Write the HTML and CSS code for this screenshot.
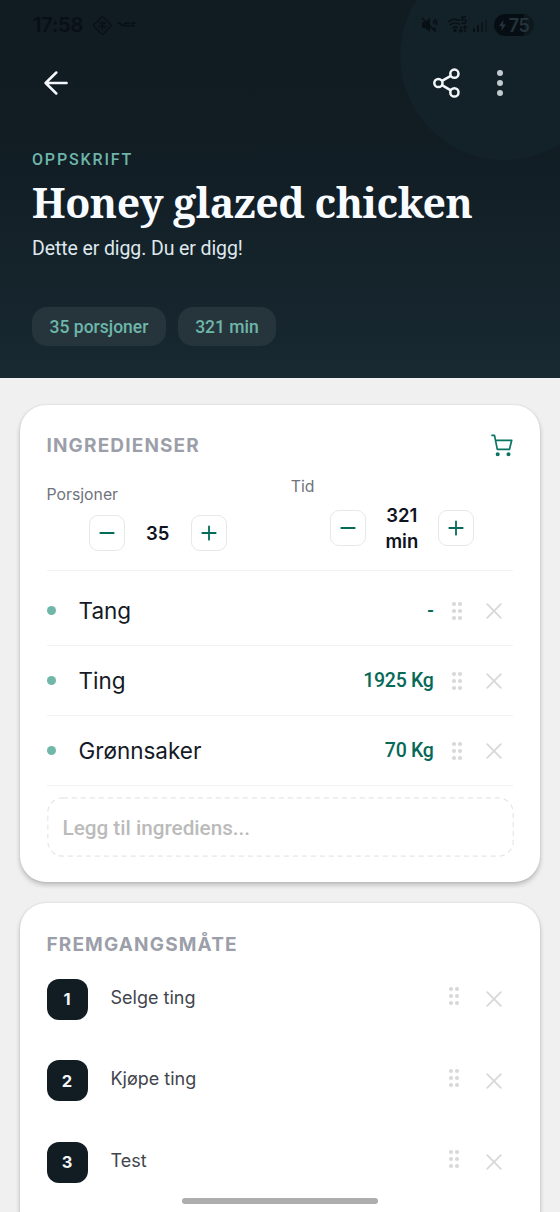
FILE: index.html
```html
<!DOCTYPE html>
<html lang="no">
<head>
<meta charset="utf-8">
<meta name="viewport" content="width=device-width">
<title>Honey glazed chicken</title>
<link rel="stylesheet" href="styles.css">
</head>
<body>
<svg class="defs" width="0" height="0">
  <symbol id="grip" viewBox="0 0 12 20"><g fill="#d9d9d9"><circle cx="3" cy="3" r="2.1"/><circle cx="9" cy="3" r="2.1"/><circle cx="3" cy="10" r="2.1"/><circle cx="9" cy="10" r="2.1"/><circle cx="3" cy="17" r="2.1"/><circle cx="9" cy="17" r="2.1"/></g></symbol>
  <symbol id="close" viewBox="0 0 16 16"><path d="M1.2 1.2 14.8 14.8M14.8 1.2 1.2 14.8" fill="none" stroke="#d8d8d8" stroke-width="1.8" stroke-linecap="round"/></symbol>
  <symbol id="minus" viewBox="0 0 16 16"><path d="M1.3 8h13.4" stroke="#056a59" stroke-width="1.8" stroke-linecap="round"/></symbol>
  <symbol id="plus" viewBox="0 0 16 16"><path d="M1.3 8h13.4M8 1.3v13.4" stroke="#056a59" stroke-width="1.8" stroke-linecap="round"/></symbol>
</svg>
<header class="hero">
  <div class="orb"></div>
  <div class="status">
    <span class="clock">17:58</span>
    <svg class="diamond" width="19" height="19" viewBox="0 0 19 19" fill="none" stroke="currentColor" stroke-width="1.3"><path d="M8.4 1.4 1.4 8.4a1.6 1.6 0 0 0 0 2.2l7 7a1.6 1.6 0 0 0 2.2 0l7-7a1.6 1.6 0 0 0 0-2.2l-7-7a1.6 1.6 0 0 0-2.2 0z"/><path stroke-width="1" d="M6 7h7M5 10h9M7 13l5-7M7 6l5 7M9.500 4.500v10"/></svg>
    <svg class="wordmark" width="20" height="6" viewBox="0 0 20 6" fill="none" stroke="currentColor" stroke-width="1.3"><path d="M0 1h3l2 3 3-3M13 1H9L8 4h4V3M19 1h-4l-.5 3H18"/></svg>
    <span class="spacer"></span>
    <svg class="mute" width="17" height="16" viewBox="0 0 17 16"><path d="M1 5h3l5-4v14l-5-4H1z" fill="currentColor"/><path d="m1 1 14 14M12 4q1.500 1 1 3M14 2q2 3 1.500 6M12 11l3 1" fill="none" stroke="currentColor" stroke-width="1.6"/></svg>
    <svg class="wifi" width="21" height="18" viewBox="0 0 21 18" fill="none" stroke="currentColor" stroke-width="1.3"><path d="M1 6Q7 1 13 5M3 9q5-4 10-.5M5.500 12q3-2 5.500 0M19 1h-4v3q4-1 4 1.500T14.500 7M14 10v6m-2-2 2 2 2-2M18 16v-6m-2 2 2-2 2 2"/><circle cx="8" cy="14.500" r="1" fill="currentColor"/></svg>
    <svg class="signal" width="15" height="13" viewBox="0 0 15 13" fill="currentColor"><rect y="9" width="2" height="4" rx="1"/><rect x="4" y="6" width="2" height="7" rx="1"/><rect x="8" y="3" width="2" height="10" rx="1" opacity=".7"/><rect x="12" width="2" height="13" rx="1" opacity=".4"/></svg>
    <span class="battery"><svg width="7" height="11" viewBox="0 0 7 11"><path d="M4.500 0 0 6h3l-.8 5L7 4.500H4z" fill="#25343a"/></svg>75</span>
  </div>
  <nav class="toolbar">
    <svg width="24" height="24" viewBox="0 0 24 24" fill="none" stroke="#f3f7fa" stroke-width="2.500" stroke-linecap="round" stroke-linejoin="round"><path d="M22.600 12H1.600M12.300 1.500 1.600 12l10.700 10.500"/></svg>
    <span class="spacer"></span>
    <svg class="share" width="28" height="30" viewBox="0 0 28 30" fill="none" stroke="#f3f7fa" stroke-width="2.500"><circle cx="5.400" cy="15" r="4.100"/><circle cx="21.400" cy="5.700" r="4.100"/><circle cx="21.400" cy="24.400" r="4.100"/><path d="m9 12.900 8.800-5.100M9 17.100l8.800 5.200"/></svg>
    <svg width="6" height="28" viewBox="0 0 6 28" fill="#c1cbd0"><circle cx="3" cy="3.900" r="3"/><circle cx="3" cy="14" r="3"/><circle cx="3" cy="24.100" r="3"/></svg>
  </nav>
  <div class="intro">
    <div class="eyebrow">OPPSKRIFT</div>
    <h1 class="title">Honey glazed chicken</h1>
    <p class="subtitle">Dette er digg. Du er digg!</p>
    <div class="chips"><span class="chip portions">35 porsjoner</span><span class="chip time">321 min</span></div>
  </div>
</header>
<main class="content">
  <section class="card ingredients">
    <div class="card-head">
      <h2 class="heading">INGREDIENSER</h2>
      <svg width="22" height="23" viewBox="0 0 22 23" fill="none" stroke="#0b7564" stroke-width="1.700" stroke-linecap="round" stroke-linejoin="round"><path d="M1 1.300h2.500L6.300 15.300H18.500L20.700 6.300H4.500"/><circle cx="6.700" cy="20.300" r="1.200" fill="#0b7564"/><circle cx="17.500" cy="20.300" r="1.200" fill="#0b7564"/></svg>
    </div>
    <div class="settings">
      <div class="setting amount">
        <div class="label">Porsjoner</div>
        <div class="stepper"><button class="step"><svg width="16" height="16"><use href="#minus"/></svg></button><span class="value">35</span><button class="step"><svg width="16" height="16"><use href="#plus"/></svg></button></div>
      </div>
      <div class="setting duration">
        <div class="label">Tid</div>
        <div class="stepper"><button class="step"><svg width="16" height="16"><use href="#minus"/></svg></button><span class="value">321<br>min</span><button class="step"><svg width="16" height="16"><use href="#plus"/></svg></button></div>
      </div>
    </div>
    <ul class="items">
      <li class="item"><i class="dot"></i><span class="name">Tang</span><span class="qty">-</span><svg class="grip" width="12" height="20"><use href="#grip"/></svg><svg width="16" height="16"><use href="#close"/></svg></li>
      <li class="item"><i class="dot"></i><span class="name">Ting</span><span class="qty">1925 Kg</span><svg class="grip" width="12" height="20"><use href="#grip"/></svg><svg width="16" height="16"><use href="#close"/></svg></li>
      <li class="item"><i class="dot"></i><span class="name">Grønnsaker</span><span class="qty">70 Kg</span><svg class="grip" width="12" height="20"><use href="#grip"/></svg><svg width="16" height="16"><use href="#close"/></svg></li>
    </ul>
    <div class="add"><svg class="outline" width="467" height="60"><rect x=".8" y=".8" width="465.400" height="58.400" rx="15" fill="none" stroke="#e6e6e6" stroke-width="1.200" stroke-dasharray="5 4"/></svg>Legg til ingrediens...</div>
  </section>
  <section class="card method">
    <h2 class="heading">FREMGANGSMÅTE</h2>
    <ol class="steps">
      <li class="row"><span class="num">1</span><span class="text">Selge ting</span><svg class="grip" width="12" height="20"><use href="#grip"/></svg><svg width="16" height="16"><use href="#close"/></svg></li>
      <li class="row"><span class="num">2</span><span class="text">Kjøpe ting</span><svg class="grip" width="12" height="20"><use href="#grip"/></svg><svg width="16" height="16"><use href="#close"/></svg></li>
      <li class="row"><span class="num">3</span><span class="text">Test</span><svg class="grip" width="12" height="20"><use href="#grip"/></svg><svg width="16" height="16"><use href="#close"/></svg></li>
    </ol>
  </section>
</main>
<div class="home-bar"></div>
</body>
</html>
```
FILE: styles.css
```css
* { box-sizing: border-box; }
html, body { margin: 0; height: 1212px; overflow: hidden; }
body { background: #f0f0f0; font-family: Inter, "Noto Sans", sans-serif; color: #151a26; }
svg { display: block; flex: none; }
h1, h2, p, ul, ol { margin: 0; padding: 0; list-style: none; }
.defs { position: absolute; }
.spacer { flex: 1; }

.hero { position: relative; height: 378px; overflow: hidden; background: linear-gradient(#111b22 0, #111c23 35%, #182931 100%); }
.orb { position: absolute; left: 400px; top: -48px; width: 208px; height: 208px; border-radius: 50%; background: #132228; }
.status { position: relative; display: flex; align-items: center; height: 50px; padding: 0 26px 0 33px; color: #080f15; }
.clock { font-size: 20px; font-weight: 600; width: 60px; letter-spacing: -.2px; }
.wordmark { margin-left: 5px; }
.mute { margin-right: 1px; }
.wifi { margin-left: 8px; }
.signal { margin-left: 5px; }
.battery { display: flex; align-items: center; justify-content: center; gap: 3px; width: 40px; height: 22px; margin-left: 6px; border-radius: 11px; background: linear-gradient(90deg, #070e13 75%, #0d191e 75%); color: #25343a; font-size: 18px; font-weight: 600; letter-spacing: -.5px; }
.toolbar { position: relative; display: flex; align-items: center; height: 66px; padding: 0 57px 0 44px; }
.share { margin-right: 36px; }
.intro { position: relative; padding: 33px 32px 0; font-family: Roboto, sans-serif; }
.eyebrow { color: #6db5a9; font-size: 16px; font-weight: 500; line-height: 22px; letter-spacing: 1.85px; }
.title { margin-top: 4px; height: 54px; line-height: 54px; color: #f8fbff; font-family: "Noto Serif", "DejaVu Serif", serif; font-size: 41px; font-weight: 700; letter-spacing: -.45px; white-space: nowrap; }
.subtitle { margin-top: 7px; font-size: 19.500px; line-height: 26px; letter-spacing: -.1px; color: #dfe8ed; white-space: nowrap; }
.chips { display: flex; gap: 12px; margin-top: 45px; }
.chip { display: flex; align-items: center; justify-content: center; height: 39px; border-radius: 15px; background: #26353c; color: #6eb6aa; font-size: 17.500px; font-weight: 500; white-space: nowrap; }
.portions { width: 134px; }
.time { width: 98px; }

.content { display: flex; flex-direction: column; gap: 21px; padding: 27px 20px 0; }
.card { border-radius: 26px; background: #fff; padding: 0 27px 0 26.500px; box-shadow: 0 3px 5px rgba(0,0,0,.22), 0 0 2px rgba(0,0,0,.12); }
.ingredients { height: 477px; }
.card-head { display: flex; align-items: center; justify-content: space-between; padding-top: 27px; height: 54px; }
.heading { font-size: 19px; font-weight: 700; line-height: 28px; letter-spacing: 1.150px; color: #9c9fa9; white-space: nowrap; }
.settings { display: grid; grid-template-columns: 1fr 1fr; gap: 22px; height: 112px; padding-top: 18px; border-bottom: 1px solid #f2f2f2; }
.amount { padding-top: 8px; }
.label { font-size: 15.800px; line-height: 20px; color: #6e737c; }
.stepper { display: flex; align-items: center; justify-content: center; height: 52px; margin-top: 2px; }
.duration .stepper { margin-top: 5px; }
.step { display: flex; align-items: center; justify-content: center; width: 36px; height: 36px; padding: 0; border: 1.500px solid #e6e8e9; border-radius: 9px; background: #fff; }
.value { width: 66px; text-align: center; font-size: 18.500px; line-height: 26px; font-weight: 600; color: #0f1220; }
.duration .value { width: 72px; }
.items { padding-top: 5px; }
.item { display: flex; align-items: center; height: 70px; border-bottom: 1px solid #f2f2f2; padding-right: 11.500px; }
.dot { width: 9px; height: 9px; border-radius: 50%; background: #70b6a9; margin-right: 23px; }
.name { flex: 1; font-size: 22.500px; line-height: 30px; padding-top: 1px; }
.qty { font-family: Roboto, sans-serif; font-size: 19.500px; font-weight: 500; letter-spacing: -.3px; color: #076958; margin-right: 17px; }
.grip { margin-right: 23px; }
.add { position: relative; display: flex; align-items: center; height: 60px; margin-top: 11px; padding: 2px 16px 0; font-family: Roboto, sans-serif; font-size: 20.700px; font-weight: 500; color: #bbb; }
.outline { position: absolute; left: 0; top: 0; }

.method { height: 309px; padding-top: 28px; border-radius: 26px 26px 0 0; }
.steps { padding-top: 19.500px; }
.row { display: flex; align-items: center; height: 41px; margin-bottom: 40.700px; padding-right: 11.500px; }
.row:last-child { margin-bottom: 0; }
.num { display: flex; align-items: center; justify-content: center; width: 41px; height: 41px; border-radius: 12px; background: #111c23; color: #f1f5f8; font-size: 16.500px; font-weight: 700; }
.text { flex: 1; margin-left: 23px; padding-bottom: 3px; font-size: 18px; line-height: 26px; color: #42454c; }
.row .grip { margin: 0 26px 6px 0; }
.home-bar { position: absolute; left: 182px; top: 1198px; width: 196px; height: 6px; border-radius: 3px; background: #adadad; }
```
